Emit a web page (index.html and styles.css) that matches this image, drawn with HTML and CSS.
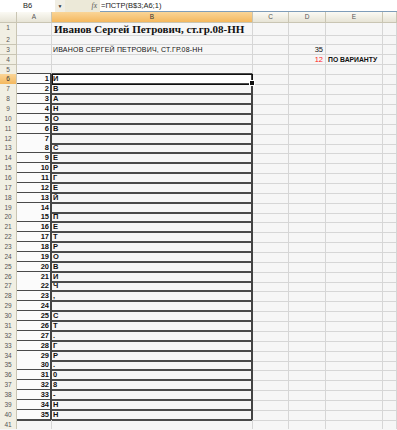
FILE: index.html
```html
<!DOCTYPE html>
<html lang="ru">
<head>
    <meta charset="UTF-8">
    <title>Лист Excel</title>
    <link rel="stylesheet" href="styles.css">
</head>
<body>
    <div class="formula-bar">
        <div class="name-box">B6</div>
        <div class="name-drop">&#9660;</div>
        <div class="fx">fx</div>
        <div class="formula">=ПСТР(B$3;A6;1)</div>
    </div>

    <div class="sheet">
        <div class="row head">
            <div class="corner"></div>
            <div class="ch">A</div>
            <div class="ch sel">B</div>
            <div class="ch">C</div>
            <div class="ch">D</div>
            <div class="ch">E</div>
            <div class="ch"></div>
        </div>

        <div class="row tall">
            <div class="rh">1</div><div class="c"></div>
            <div class="c title">Иванов Сергей Петрович, ст.гр.08-НН</div>
            <div class="c"></div><div class="c"></div><div class="c"></div><div class="c"></div>
        </div>
        <div class="row">
            <div class="rh">2</div><div class="c"></div><div class="c"></div>
            <div class="c"></div><div class="c"></div><div class="c"></div><div class="c"></div>
        </div>
        <div class="row">
            <div class="rh">3</div><div class="c"></div>
            <div class="c caps">ИВАНОВ СЕРГЕЙ ПЕТРОВИЧ, СТ.ГР.08-НН</div>
            <div class="c"></div><div class="c num">35</div><div class="c"></div><div class="c"></div>
        </div>
        <div class="row">
            <div class="rh">4</div><div class="c"></div><div class="c"></div>
            <div class="c"></div><div class="c num red">12</div>
            <div class="c note">ПО ВАРИАНТУ</div><div class="c"></div>
        </div>
        <div class="row before-box">
            <div class="rh">5</div><div class="c a"></div><div class="c b"></div>
            <div class="c"></div><div class="c"></div><div class="c"></div><div class="c"></div>
        </div>

        <div class="row box">
            <div class="rh sel">6</div><div class="c a">1</div>
            <div class="c b active">И<span class="handle"></span></div>
            <div class="c"></div><div class="c"></div><div class="c"></div><div class="c"></div>
        </div>
        <div class="row box"><div class="rh">7</div><div class="c a">2</div><div class="c b">В</div><div class="c"></div><div class="c"></div><div class="c"></div><div class="c"></div></div>
        <div class="row box"><div class="rh">8</div><div class="c a">3</div><div class="c b">А</div><div class="c"></div><div class="c"></div><div class="c"></div><div class="c"></div></div>
        <div class="row box"><div class="rh">9</div><div class="c a">4</div><div class="c b">Н</div><div class="c"></div><div class="c"></div><div class="c"></div><div class="c"></div></div>
        <div class="row box"><div class="rh">10</div><div class="c a">5</div><div class="c b">О</div><div class="c"></div><div class="c"></div><div class="c"></div><div class="c"></div></div>
        <div class="row box"><div class="rh">11</div><div class="c a">6</div><div class="c b">В</div><div class="c"></div><div class="c"></div><div class="c"></div><div class="c"></div></div>
        <div class="row box"><div class="rh">12</div><div class="c a">7</div><div class="c b"></div><div class="c"></div><div class="c"></div><div class="c"></div><div class="c"></div></div>
        <div class="row box"><div class="rh">13</div><div class="c a">8</div><div class="c b">С</div><div class="c"></div><div class="c"></div><div class="c"></div><div class="c"></div></div>
        <div class="row box"><div class="rh">14</div><div class="c a">9</div><div class="c b">Е</div><div class="c"></div><div class="c"></div><div class="c"></div><div class="c"></div></div>
        <div class="row box"><div class="rh">15</div><div class="c a">10</div><div class="c b">Р</div><div class="c"></div><div class="c"></div><div class="c"></div><div class="c"></div></div>
        <div class="row box"><div class="rh">16</div><div class="c a">11</div><div class="c b">Г</div><div class="c"></div><div class="c"></div><div class="c"></div><div class="c"></div></div>
        <div class="row box"><div class="rh">17</div><div class="c a">12</div><div class="c b">Е</div><div class="c"></div><div class="c"></div><div class="c"></div><div class="c"></div></div>
        <div class="row box"><div class="rh">18</div><div class="c a">13</div><div class="c b">Й</div><div class="c"></div><div class="c"></div><div class="c"></div><div class="c"></div></div>
        <div class="row box"><div class="rh">19</div><div class="c a">14</div><div class="c b"></div><div class="c"></div><div class="c"></div><div class="c"></div><div class="c"></div></div>
        <div class="row box"><div class="rh">20</div><div class="c a">15</div><div class="c b">П</div><div class="c"></div><div class="c"></div><div class="c"></div><div class="c"></div></div>
        <div class="row box"><div class="rh">21</div><div class="c a">16</div><div class="c b">Е</div><div class="c"></div><div class="c"></div><div class="c"></div><div class="c"></div></div>
        <div class="row box"><div class="rh">22</div><div class="c a">17</div><div class="c b">Т</div><div class="c"></div><div class="c"></div><div class="c"></div><div class="c"></div></div>
        <div class="row box"><div class="rh">23</div><div class="c a">18</div><div class="c b">Р</div><div class="c"></div><div class="c"></div><div class="c"></div><div class="c"></div></div>
        <div class="row box"><div class="rh">24</div><div class="c a">19</div><div class="c b">О</div><div class="c"></div><div class="c"></div><div class="c"></div><div class="c"></div></div>
        <div class="row box"><div class="rh">25</div><div class="c a">20</div><div class="c b">В</div><div class="c"></div><div class="c"></div><div class="c"></div><div class="c"></div></div>
        <div class="row box"><div class="rh">26</div><div class="c a">21</div><div class="c b">И</div><div class="c"></div><div class="c"></div><div class="c"></div><div class="c"></div></div>
        <div class="row box"><div class="rh">27</div><div class="c a">22</div><div class="c b">Ч</div><div class="c"></div><div class="c"></div><div class="c"></div><div class="c"></div></div>
        <div class="row box"><div class="rh">28</div><div class="c a">23</div><div class="c b">,</div><div class="c"></div><div class="c"></div><div class="c"></div><div class="c"></div></div>
        <div class="row box"><div class="rh">29</div><div class="c a">24</div><div class="c b"></div><div class="c"></div><div class="c"></div><div class="c"></div><div class="c"></div></div>
        <div class="row box"><div class="rh">30</div><div class="c a">25</div><div class="c b">С</div><div class="c"></div><div class="c"></div><div class="c"></div><div class="c"></div></div>
        <div class="row box"><div class="rh">31</div><div class="c a">26</div><div class="c b">Т</div><div class="c"></div><div class="c"></div><div class="c"></div><div class="c"></div></div>
        <div class="row box"><div class="rh">32</div><div class="c a">27</div><div class="c b">.</div><div class="c"></div><div class="c"></div><div class="c"></div><div class="c"></div></div>
        <div class="row box"><div class="rh">33</div><div class="c a">28</div><div class="c b">Г</div><div class="c"></div><div class="c"></div><div class="c"></div><div class="c"></div></div>
        <div class="row box"><div class="rh">34</div><div class="c a">29</div><div class="c b">Р</div><div class="c"></div><div class="c"></div><div class="c"></div><div class="c"></div></div>
        <div class="row box"><div class="rh">35</div><div class="c a">30</div><div class="c b">.</div><div class="c"></div><div class="c"></div><div class="c"></div><div class="c"></div></div>
        <div class="row box"><div class="rh">36</div><div class="c a">31</div><div class="c b">0</div><div class="c"></div><div class="c"></div><div class="c"></div><div class="c"></div></div>
        <div class="row box"><div class="rh">37</div><div class="c a">32</div><div class="c b">8</div><div class="c"></div><div class="c"></div><div class="c"></div><div class="c"></div></div>
        <div class="row box"><div class="rh">38</div><div class="c a">33</div><div class="c b">-</div><div class="c"></div><div class="c"></div><div class="c"></div><div class="c"></div></div>
        <div class="row box"><div class="rh">39</div><div class="c a">34</div><div class="c b">Н</div><div class="c"></div><div class="c"></div><div class="c"></div><div class="c"></div></div>
        <div class="row box"><div class="rh">40</div><div class="c a">35</div><div class="c b">Н</div><div class="c"></div><div class="c"></div><div class="c"></div><div class="c"></div></div>
        <div class="row">
            <div class="rh">41</div><div class="c"></div><div class="c"></div>
            <div class="c"></div><div class="c"></div><div class="c"></div><div class="c"></div>
        </div>
    </div>
</body>
</html>
```

FILE: styles.css
```css
body {
    margin: 0;
    background: #f6f6f6;
    font-family: "Liberation Sans", Arial, sans-serif;
    overflow: hidden;
}

/* formula bar */
.formula-bar {
    display: flex;
    align-items: stretch;
    height: 12px;
    background: #ece9d8;
    font-size: 7.5px;
    color: #222;
}
.name-box {
    width: 55px;
    background: #fff;
    text-align: center;
    line-height: 12px;
}
.name-drop {
    width: 10px;
    background: #f0eee4;
    font-size: 5px;
    line-height: 12px;
    text-align: center;
    color: #333;
}
.fx {
    width: 35px;
    text-align: right;
    padding-right: 3px;
    box-sizing: border-box;
    font-family: "Liberation Serif", serif;
    font-style: italic;
    font-size: 7.5px;
    line-height: 12px;
    color: #555;
}
.formula {
    flex: 1;
    background: #fff;
    border-bottom: 1px solid #7f9db9;
    line-height: 11px;
    padding-left: 1px;
}

/* grid */
.row {
    display: grid;
    grid-template-columns: 17px 35px 201px 36px 37px 57px 1fr;
    height: 9.87px;
    font-size: 7.5px;
}
.row.tall {
    height: 12px;
}
.row.head {
    height: 11px;
}
.corner,
.ch,
.rh {
    box-sizing: border-box;
    background: linear-gradient(#fbfaf4, #e7e4d6);
    border-right: 1px solid #c9c5b3;
    border-bottom: 1px solid #c9c5b3;
    color: #555;
    text-align: center;
    font-size: 6.5px;
    line-height: 10px;
}
.rh {
    background: #f1efe3;
    line-height: 9px;
}
.ch.sel,
.rh.sel {
    background: linear-gradient(#fad597, #f4b85e);
    color: #333;
}
.rh.sel {
    border-bottom: 1px solid #3c5ea8;
}

.c {
    box-sizing: border-box;
    border-right: 1px solid #d6d6d6;
    border-bottom: 1px solid #d6d6d6;
    white-space: nowrap;
    overflow: visible;
    line-height: 9px;
    color: #111;
    min-width: 0;
}
.title {
    font-family: "Liberation Serif", serif;
    font-weight: bold;
    font-size: 11px;
    line-height: 12px;
    padding-left: 2px;
    position: relative;
    z-index: 1;
}
.caps {
    font-size: 7px;
    letter-spacing: 0.2px;
    padding-left: 1px;
    position: relative;
    z-index: 1;
}
.num {
    text-align: right;
    padding-right: 2px;
}
.red {
    color: #ff1a1a;
}
.note {
    font-weight: bold;
    font-size: 6.8px;
    padding-left: 2px;
    position: relative;
    z-index: 1;
}

/* bordered block A6:B40 */
.before-box .a,
.before-box .b,
.box .a,
.box .b {
    border-bottom: 2px solid #4a4a4a;
}
.box .a {
    background: #fbfbfb;
    border-right: 2px solid #444;
    text-align: right;
    padding-right: 1px;
    font-weight: bold;
}
.box .b {
    border-right: 2px solid #444;
    padding-left: 1px;
    font-weight: bold;
}
.active {
    position: relative;
    outline: 1px solid #111;
    outline-offset: -1px;
    background: #fff;
}
.handle {
    position: absolute;
    right: -4px;
    bottom: -3px;
    width: 4px;
    height: 4px;
    background: #111;
    border: 1px solid #fff;
}
```
